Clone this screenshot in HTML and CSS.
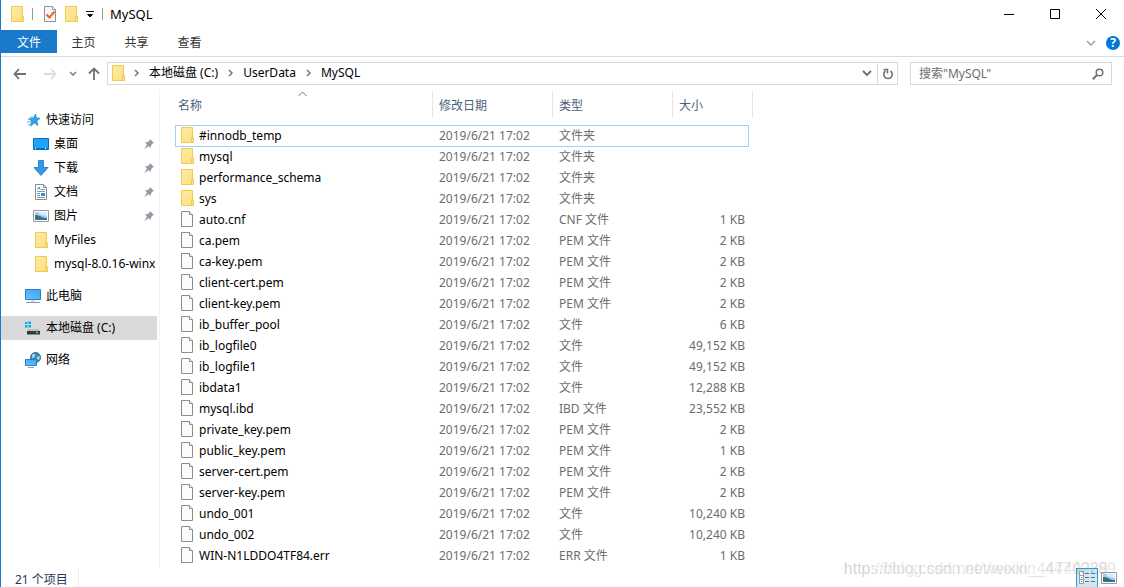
FILE: index.html
```html
<!DOCTYPE html>
<html lang="zh-CN">
<head>
<meta charset="utf-8">
<title>MySQL</title>
<link rel="stylesheet" href="styles.css">
</head>
<body>
<svg class="defs" aria-hidden="true">
  <defs>
    <linearGradient id="gold" x1="0" y1="0" x2="1" y2="1"><stop offset="0" stop-color="#ffeaa4"/><stop offset="1" stop-color="#fddf82"/></linearGradient>
    <linearGradient id="screen" x1="0" y1="1" x2="1" y2="0"><stop offset="0" stop-color="#6cc4ff"/><stop offset="1" stop-color="#38a4f4"/></linearGradient>
    <symbol id="folder" viewBox="0 0 16 16"><path d="M1.500.5h11v10h1v5h-12z" fill="url(#gold)"/><path d="M12.500 10V.5h-11v15h12v-5h-2v5" fill="none" stroke="#efcb4f"/></symbol>
    <symbol id="file" viewBox="0 0 16 16"><path d="M1.500.5h8l3 3v12h-11z" fill="#fbfbfb" stroke="#8c8c8c"/><path d="M9.500.5v3h3" fill="#fff" stroke="#8c8c8c"/></symbol>
    <symbol id="pin" viewBox="0 0 12 12"><path d="M7 1l4 4-1.500.5-1.500 2-.5 2.500-2-2L1 11.500 4 6.500l-2-2 3-.5 1.500-1.500z" fill="#8e9aa5"/></symbol>
    <symbol id="photo" viewBox="0 0 16 16"><path d="M.5 2.500h15v11H.5z" fill="#fff" stroke="#9a9a9a"/><path d="M2 4h12v8H2z" fill="#9fcdfa"/><path d="M6 4h8v4q-4 0-8-2z" fill="#d8ecfc"/><path d="M2 7q3-.5 6 1.500t6 1.500v1H2z" fill="#42706b"/><path d="M2 10.500h12V12H2z" fill="#2f72ae"/></symbol>
  </defs>
</svg>
<div class="window">
  <header class="titlebar">
    <svg class="icon"><use href="#folder"/></svg>
    <i class="rule"></i>
    <button class="tool" aria-label="属性"><svg class="icon" viewBox="0 0 16 16"><path d="M2.500.5h8l3 3v12h-11z" fill="#f6f8fa" stroke="#929292"/><path d="M10.500.5v3h3" fill="#fff" stroke="#929292"/><path d="M4.500 8.500l3 3 5-6" fill="none" stroke="#ee6323" stroke-width="2"/></svg></button>
    <button class="tool" aria-label="新建文件夹"><svg class="icon"><use href="#folder"/></svg></button>
    <button class="tool" aria-label="自定义快速访问工具栏"><svg width="8" height="8" viewBox="0 0 8 8"><path d="M0 1.500h8M1.500 4.500h5L4 7z" stroke="#111" fill="#111"/></svg></button>
    <i class="rule near"></i>
    <h1>MySQL</h1>
    <div class="caption">
      <button aria-label="最小化"><svg width="12" height="12"><path d="M1 6.500h10" stroke="#000"/></svg></button>
      <button aria-label="最大化"><svg width="12" height="12"><path d="M1.500 1.500h9v9h-9z" stroke="#000" fill="none"/></svg></button>
      <button aria-label="关闭"><svg width="12" height="12"><path d="M1 1l10 10M11 1L1 11" stroke="#000"/></svg></button>
    </div>
  </header>
  <nav class="ribbon">
    <button class="tab active">文件</button><button class="tab">主页</button><button class="tab">共享</button><button class="tab">查看</button>
    <div class="ribbon-end">
      <button class="tool" aria-label="展开功能区"><svg width="10" height="8"><path d="M1 2l4 4 4-4" fill="none" stroke="#999" stroke-width="1.400"/></svg></button>
      <button class="help" aria-label="帮助">?</button>
    </div>
  </nav>
  <div class="location">
    <button class="nav-button" aria-label="后退"><svg width="14" height="12"><path d="M6 1L1.500 6 6 11M2 6h11" fill="none" stroke="#707070" stroke-width="1.800"/></svg></button>
    <button class="nav-button forward" aria-label="前进"><svg width="14" height="12"><path d="M8 1l4.500 5L8 11M12 6H1" fill="none" stroke="#dcdcdc" stroke-width="1.800"/></svg></button>
    <button class="nav-button recent" aria-label="最近"><svg width="8" height="6"><path d="M1 1l3 3 3-3" fill="none" stroke="#858585" stroke-width="1.600"/></svg></button>
    <button class="nav-button up" aria-label="向上"><svg width="12" height="14"><path d="M1 6.500L6 1.500l5 5M6 2v11" fill="none" stroke="#707070" stroke-width="1.800"/></svg></button>
    <div class="address">
      <svg class="icon"><use href="#folder"/></svg>
      <svg class="chevron" viewBox="0 0 6 8"><path d="M1 1l3 3-3 3"/></svg><a href="#c">本地磁盘 (C:)</a>
      <svg class="chevron" viewBox="0 0 6 8"><path d="M1 1l3 3-3 3"/></svg><a href="#userdata">UserData</a>
      <svg class="chevron" viewBox="0 0 6 8"><path d="M1 1l3 3-3 3"/></svg><a href="#mysql">MySQL</a>
      <button class="drop" aria-label="历史"><svg width="10" height="8"><path d="M1 2l4 4 4-4" fill="none" stroke="#6e6e6e" stroke-width="1.800"/></svg></button>
      <button class="refresh" aria-label="刷新"><svg width="12" height="12"><path d="M8.500 3a4.200 4.200 0 1 1-5 0M1.500 1.500h4v4" fill="none" stroke="#707070" stroke-width="1.600"/></svg></button>
    </div>
    <label class="search"><input type="text" aria-label="搜索" placeholder='搜索"MySQL"'><svg width="12" height="12"><circle cx="7.500" cy="4.500" r="3.300" fill="none" stroke="#707070" stroke-width="1.500"/><path d="M5 7L.8 11.200" stroke="#707070" stroke-width="2"/></svg></label>
  </div>
  <div class="body">
    <aside class="sidebar">
      <a class="root" href="#quick"><svg class="icon" viewBox="0 0 16 16"><path d="M10.500 2l.8 4 3.700.3-3.200 2.700 1 4.500-3.300-2.500-4 3 1.200-4.700L4 6.500l4.500-.3z" fill="#2ba4ef" stroke="#1580c8" stroke-width=".7"/><path d="M3 7.500h3M2 10h4M3 12.500h2M5 5h3" stroke="#59b7ed"/></svg><span>快速访问</span></a>
      <a href="#desktop"><svg class="icon" viewBox="0 0 16 16"><path d="M.5 2.500h15v11H.5z" fill="#23a2fa" stroke="#0b70bc"/><path d="M1 12.500h14" stroke="#096db8"/><path d="M2 12.500h1m9 0h1" stroke="#fff"/></svg><span>桌面</span><svg class="pin"><use href="#pin"/></svg></a>
      <a href="#downloads"><svg class="icon" viewBox="0 0 16 16"><path d="M5.500.5h5v7h4.500L8 15.500 1 7.500h4.500z" fill="#3a96e6" stroke="#2f84cf"/></svg><span>下载</span><svg class="pin"><use href="#pin"/></svg></a>
      <a href="#documents"><svg class="icon" viewBox="0 0 16 16"><path d="M2.500.5h8l3 3v12h-11z" fill="#fff" stroke="#8c8c8c"/><path d="M10.500.5v3h3" fill="none" stroke="#8c8c8c"/><path d="M8 5.500h4M4 7.500h8M4 9.500h3M4 11.500h3M4 13.500h8" stroke="#8198a8"/><path d="M4.500 5.500l1.500-2.500 1 2.500" fill="none" stroke="#2f8ed5"/><path d="M8 9h4v3H8z" fill="#2f8ed5"/></svg><span>文档</span><svg class="pin"><use href="#pin"/></svg></a>
      <a href="#pictures"><svg class="icon"><use href="#photo"/></svg><span>图片</span><svg class="pin"><use href="#pin"/></svg></a>
      <a href="#myfiles"><svg class="icon shifted"><use href="#folder"/></svg><span>MyFiles</span></a>
      <a href="#winx"><svg class="icon shifted"><use href="#folder"/></svg><span>mysql-8.0.16-winx</span></a>
      <a class="root group" href="#pc"><svg class="icon" viewBox="0 0 16 16"><path d="M.5 1.500h15v10H.5z" fill="url(#screen)" stroke="#2f7fb8"/><path d="M6 12h4v2H6z" fill="#d3dce2"/><path d="M1 14.500h14" stroke="#8398a6"/></svg><span>此电脑</span></a>
      <a class="root group selected" href="#c"><svg class="icon" viewBox="0 0 16 16"><path d="M0 2h2.500v2H0zM3.500 1.500H6V4H3.500zM0 5h2.500v2.500H0zM3.500 5H6v2.500H3.500z" fill="#00b0ef"/><path d="M3 9h11l1 2.500H2z" fill="#b9bec1"/><path d="M2 11h13v3.500H2z" fill="#34393c"/><path d="M11 12.500h2" stroke="#35ef45" stroke-width="1.500"/></svg><span>本地磁盘 (C:)</span></a>
      <a class="root group" href="#network"><svg class="icon" viewBox="0 0 16 16"><circle cx="10.500" cy="5.500" r="5" fill="#4389b1" stroke="#316d90"/><path d="M7 3q3-3 3 0T7 6zM12 5l3-1-1 4-2-1z" fill="#a9d6ec"/><path d="M.5 7.500h11v6H.5z" fill="url(#screen)" stroke="#2f7fb8"/><path d="M3 15.500h6" stroke="#8ba6b5"/></svg><span>网络</span></a>
    </aside>
    <main class="content">
      <table>
        <colgroup><col class="c-name"><col class="c-date"><col class="c-type"><col class="c-size"></colgroup>
        <thead><tr><th scope="col">名称<svg class="sort" width="9" height="6"><path d="M.5 5l4-4 4 4" fill="none" stroke="#777"/></svg></th><th scope="col">修改日期</th><th scope="col">类型</th><th scope="col">大小</th></tr></thead>
        <tbody id="files"></tbody>
      </table>
    </main>
  </div>
  <footer class="status"><span>21 个项目</span>
    <div class="views">
      <button class="view active" aria-label="详细信息"><svg width="18" height="16"><path d="M1.500 1.500h4v4h-4zM1.500 5.500h4v4h-4zM1.500 9.500h4v4h-4z" fill="#fff" stroke="#999"/><path d="M7 3.500h4m2 0h4M7 7.500h4m2 0h4M7 11.500h4m2 0h4" stroke="#6a7379"/><path d="M3 7.500h1" stroke="#2878e8"/><path d="M3 11.500h1" stroke="#e12222"/></svg></button>
      <button class="view" aria-label="大图标"><svg width="16" height="16"><use href="#photo"/></svg></button>
    </div>
  </footer>
  <div class="watermark first">https://blog.csdn.net/weixin_44740289</div>
  <div class="watermark second">http://blog.csdn.net/weixin_44749289</div>
</div>
<script src="files.js"></script>
</body>
</html>
```
FILE: styles.css
```css
* { box-sizing: border-box; }
body { margin: 0; background: #fff; color: #000; font: 12px/16px "Noto Sans", "Noto Sans CJK SC", sans-serif; }
button { border: 0; padding: 0; margin: 0; background: none; font: inherit; color: inherit; display: flex; align-items: center; justify-content: center; }
a { color: inherit; text-decoration: none; }
svg { display: block; flex: none; }
h1 { margin: 0; font-size: 13px; line-height: 16px; font-weight: 400; }
.defs { position: absolute; width: 0; height: 0; }
.icon { width: 16px; height: 16px; }
.window { position: relative; display: flex; flex-direction: column; height: 100vh; overflow: hidden; border-left: 1px solid #1979ca; }
.titlebar { display: flex; align-items: center; height: 30px; padding: 0 0 2px 9px; flex: none; }
.rule { width: 1px; height: 12px; margin: 0 9px 0 6px; background: #999; }
.rule.near { margin: 0 7px 0 8px; }
.tool + .tool { margin-left: 6px; }
.caption { display: flex; margin-left: auto; }
.caption button { width: 46px; height: 28px; }
.ribbon { display: flex; height: 27px; flex: none; border-bottom: 1px solid #dadbdc; }
.tab { width: 53px; height: 23px; padding-top: 2px; color: #333; }
.tab.active { width: 56px; background: #1979ca; color: #fff; }
.ribbon-end { display: flex; align-items: center; gap: 10px; margin-left: auto; padding-right: 4px; }
.help { width: 14px; height: 14px; border-radius: 50%; background: #0078d7; color: #fff; font-weight: 700; }
.location { display: flex; align-items: center; height: 33px; flex: none; padding: 0 12px; }
.nav-button { width: 14px; height: 22px; }
.forward { margin-left: 16px; }
.recent { width: 8px; margin-left: 12px; }
.up { margin: 0 6px 0 10px; }
.address { display: flex; align-items: center; flex: 1; height: 23px; padding: 0 0 2px 3px; border: 1px solid #d9d9d9; }
.chevron { width: 6px; height: 8px; margin: 0 9px 0 10px; fill: none; stroke: #777; stroke-width: 1.5; }
.address .icon + .chevron { margin: 0 9px 0 7px; }
.drop { width: 20px; margin-left: auto; }
.refresh { width: 20px; align-self: stretch; margin-bottom: -2px; border-left: 1px solid #d9d9d9; }
.search { display: flex; align-items: center; width: 202px; height: 23px; margin-left: 12px; padding: 0 7px 0 8px; border: 1px solid #d9d9d9; }
.search input { flex: 1; min-width: 0; padding: 0; border: 0; outline: 0; background: none; font: inherit; }
.search input::placeholder { color: #6d6d6d; opacity: 1; }
.body { display: flex; flex: 1; min-height: 0; }
.sidebar { width: 159px; flex: none; padding: 18px 1px 0 0; border-right: 1px solid #f3f3f3; }
.sidebar a { display: flex; align-items: center; gap: 5px; height: 24px; margin-right: 1px; padding-left: 32px; white-space: nowrap; }
.sidebar .root { padding-left: 24px; }
.sidebar .group { margin-top: 8px; }
.sidebar .selected { background: #d9d9d9; }
.sidebar .shifted { margin: 0 -1px 0 1px; }
.pin { width: 12px; height: 12px; margin: 0 2px 0 auto; }
.content { flex: 1; min-width: 0; padding: 1px 0 0 15px; }
table { border-collapse: separate; border-spacing: 0; table-layout: fixed; width: 578px; }
.c-name { width: 258px; }
.c-date, .c-type { width: 120px; }
.c-size { width: 80px; }
th { position: relative; height: 27px; padding: 2px 0 0 6px; border-right: 1px solid #e5e5e5; text-align: left; font-weight: 400; color: #4c607a; }
th:first-child { padding-left: 3px; }
.sort { position: absolute; left: 48%; top: 0; }
thead::after { content: ""; display: block; height: 7px; }
td { height: 21px; padding: 0 0 0 6px; line-height: 21px; vertical-align: top; color: #6d6d6d; white-space: nowrap; }
td:first-child { padding-left: 5px; color: #000; }
td:last-child { padding: 0 8px 0 0; text-align: right; }
.file { display: flex; align-items: flex-start; gap: 3px; }
.file .icon { margin-top: 2px; }
.focus { position: relative; }
.focus::after { content: ""; position: absolute; inset: 0 4px -1px 0; border: 1px solid #99d1ff; pointer-events: none; }
.status { display: flex; align-items: center; height: 19px; flex: none; padding-left: 14px; color: #1e395b; }
.status span { padding: 4px 10px 0 0; border-right: 1px solid #f0f0f0; }
.views { display: flex; margin-left: auto; align-self: flex-start; padding-right: 7px; gap: 3px; }
.view.active { width: 22px; height: 19px; background: #cce8f6; border: 1px solid #26a0da; border-bottom: 0; }
.watermark { position: absolute; bottom: 9px; font: 16px/18px "Liberation Sans", sans-serif; color: rgb(130 130 130 / 20%); white-space: nowrap; pointer-events: none; }
.first { right: 8px; }
.second { right: 16px; }
```
FILE: files.js
```js
const files = [
  ["#innodb_temp", "文件夹", ""], ["mysql", "文件夹", ""], ["performance_schema", "文件夹", ""], ["sys", "文件夹", ""],
  ["auto.cnf", "CNF 文件", "1 KB"], ["ca.pem", "PEM 文件", "2 KB"], ["ca-key.pem", "PEM 文件", "2 KB"],
  ["client-cert.pem", "PEM 文件", "2 KB"], ["client-key.pem", "PEM 文件", "2 KB"], ["ib_buffer_pool", "文件", "6 KB"],
  ["ib_logfile0", "文件", "49,152 KB"], ["ib_logfile1", "文件", "49,152 KB"], ["ibdata1", "文件", "12,288 KB"],
  ["mysql.ibd", "IBD 文件", "23,552 KB"], ["private_key.pem", "PEM 文件", "2 KB"], ["public_key.pem", "PEM 文件", "1 KB"],
  ["server-cert.pem", "PEM 文件", "2 KB"], ["server-key.pem", "PEM 文件", "2 KB"], ["undo_001", "文件", "10,240 KB"],
  ["undo_002", "文件", "10,240 KB"], ["WIN-N1LDDO4TF84.err", "ERR 文件", "1 KB"]
];
document.getElementById("files").innerHTML = files.map(([name, type, size], i) =>
  `<tr${i === 0 ? ' class="focus"' : ""}><td><div class="file"><svg class="icon"><use href="#${type === "文件夹" ? "folder" : "file"}"/></svg>${name}</div></td><td>2019/6/21 17:02</td><td>${type}</td><td>${size}</td></tr>`
).join("");
```
